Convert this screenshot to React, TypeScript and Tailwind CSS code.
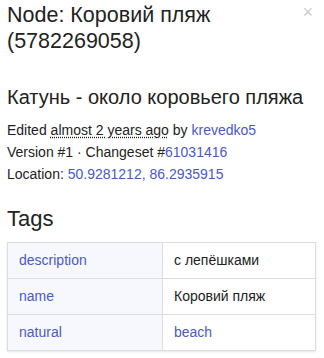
const TAGS = [
  { k: "description", v: "с лепёшками", link: false },
  { k: "name", v: "Коровий пляж", link: false },
  { k: "natural", v: "beach", link: true },
];

export default function App() {
  return (
    <div className="w-[324px] h-[358px] overflow-hidden bg-white text-[#222] font-['Liberation_Sans',Arial,sans-serif] px-[7px] pt-[2px]">
      <div className="flex items-start justify-between">
        <h2 className="text-[21.5px] leading-[26px]">Node: Коровий пляж (5782269058)</h2>
        <span className="text-[#ccc] text-[18px] leading-none mt-[1px] mr-[4px]">×</span>
      </div>

      <h4 className="text-[20px] leading-[24px] mt-[31px]">Катунь - около коровьего пляжа</h4>

      <div className="mt-[10px] text-[14px] leading-[22px]">
        <div>
          Edited{" "}
          <span className="underline decoration-dotted underline-offset-2">almost 2 years ago</span> by{" "}
          <a className="text-[#4a5ac5]">krevedko5</a>
        </div>
        <div>
          Version #1 · Changeset #<a className="text-[#4a5ac5]">61031416</a>
        </div>
        <div>
          Location: <a className="text-[#4a5ac5]">50.9281212, 86.2935915</a>
        </div>
      </div>

      <h4 className="text-[22px] leading-[26px] mt-[21px]">Tags</h4>

      <table className="mt-[10px] w-[309px] border-collapse text-[14px] shadow-[0_1px_2px_rgba(0,0,0,0.1)]">
        <tbody>
          {TAGS.map((t) => (
            <tr key={t.k} className="h-[36px]">
              <td className="w-[155px] border border-[#ddd] bg-[#f7f8fd] px-[11px] text-[#4a5ac5]">{t.k}</td>
              <td className={`border border-[#ddd] px-[11px] ${t.link ? "text-[#4a5ac5]" : ""}`}>{t.v}</td>
            </tr>
          ))}
        </tbody>
      </table>
    </div>
  );
}
